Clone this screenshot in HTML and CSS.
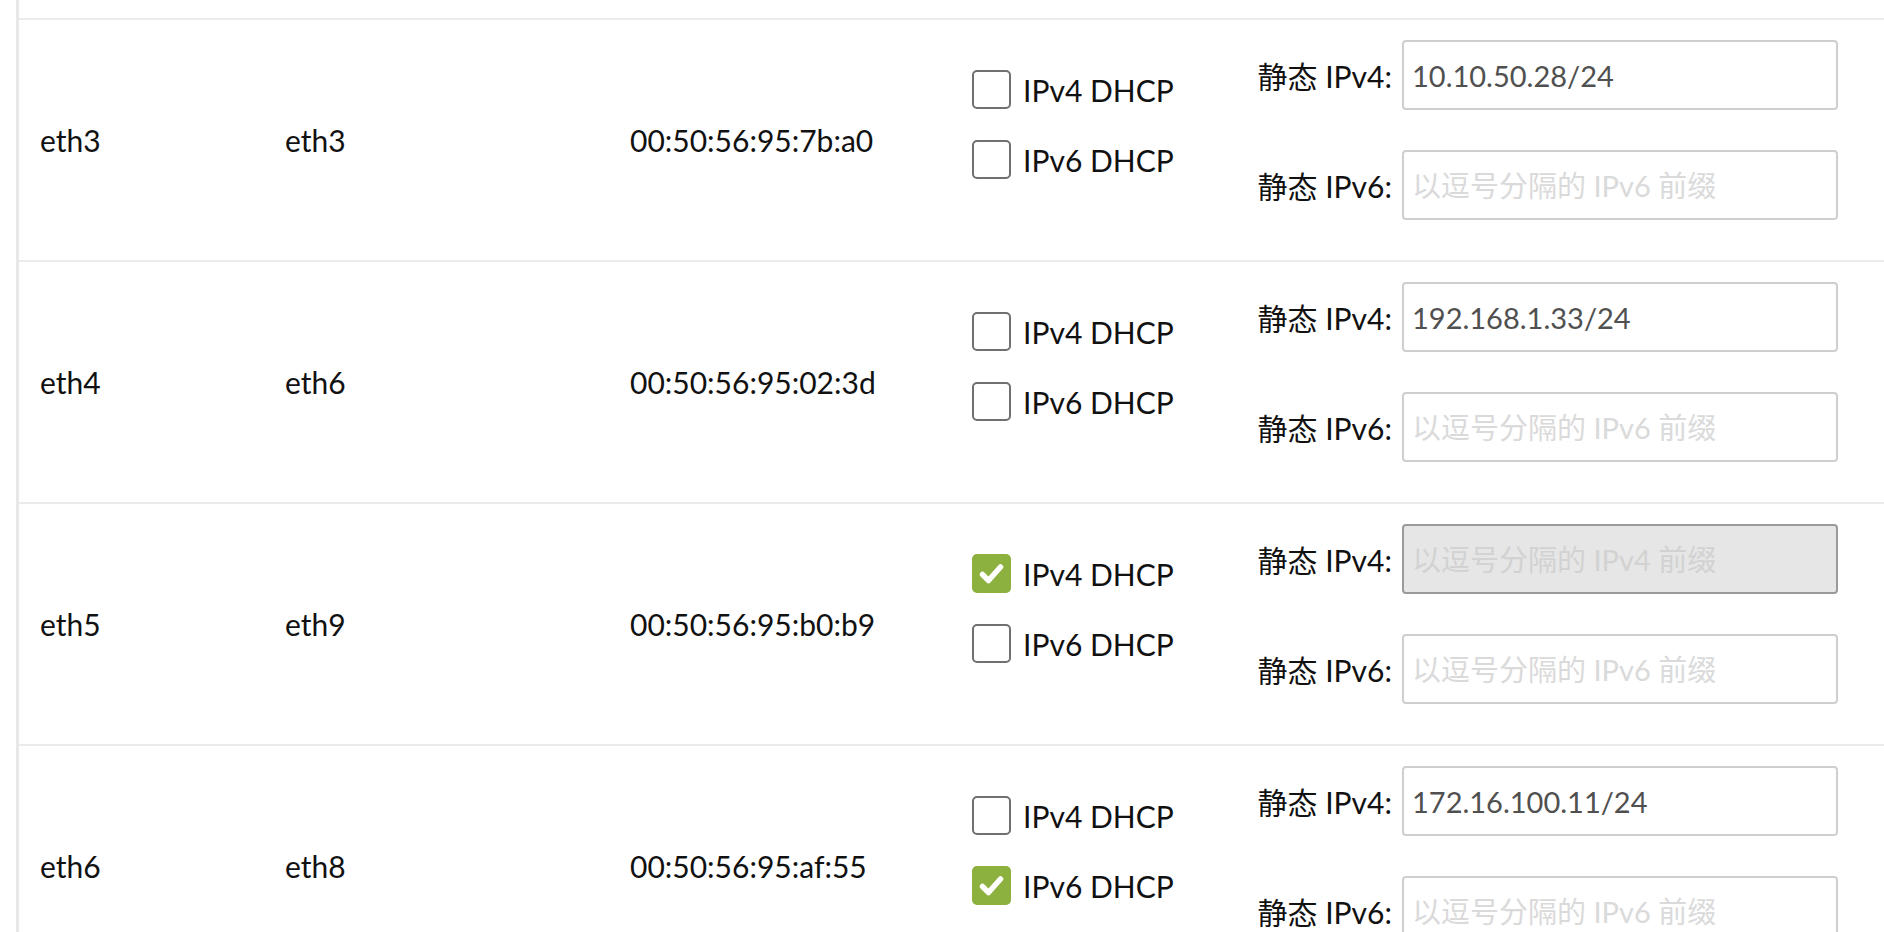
FILE: index.html
```html
<!DOCTYPE html>
<html lang="zh-CN">
<head>
<meta charset="utf-8">
<title>网络接口</title>
<link rel="stylesheet" href="styles.css">
</head>
<body>
<div class="table">
  <div class="row">
    <div class="cell">eth3</div>
    <div class="cell">eth3</div>
    <div class="cell">00:50:56:95:7b:a0</div>
    <div class="checks">
      <label class="check"><span class="box"></span>IPv4 DHCP</label>
      <label class="check"><span class="box"></span>IPv6 DHCP</label>
    </div>
    <div class="form">
      <div class="group"><span class="lbl">静态 IPv4:</span><input class="field" type="text" value="10.10.50.28/24" placeholder="以逗号分隔的 IPv4 前缀"></div>
      <div class="group"><span class="lbl">静态 IPv6:</span><input class="field" type="text" placeholder="以逗号分隔的 IPv6 前缀"></div>
    </div>
  </div>
  <div class="row">
    <div class="cell">eth4</div>
    <div class="cell">eth6</div>
    <div class="cell">00:50:56:95:02:3d</div>
    <div class="checks">
      <label class="check"><span class="box"></span>IPv4 DHCP</label>
      <label class="check"><span class="box"></span>IPv6 DHCP</label>
    </div>
    <div class="form">
      <div class="group"><span class="lbl">静态 IPv4:</span><input class="field" type="text" value="192.168.1.33/24" placeholder="以逗号分隔的 IPv4 前缀"></div>
      <div class="group"><span class="lbl">静态 IPv6:</span><input class="field" type="text" placeholder="以逗号分隔的 IPv6 前缀"></div>
    </div>
  </div>
  <div class="row">
    <div class="cell">eth5</div>
    <div class="cell">eth9</div>
    <div class="cell">00:50:56:95:b0:b9</div>
    <div class="checks">
      <label class="check"><span class="box on"><svg class="tick" viewBox="0 0 39 39"><path d="M10.5 20.5 L16.5 26.5 L28.5 13" fill="none" stroke="#fff" stroke-width="5.5" stroke-linecap="round" stroke-linejoin="round"/></svg></span>IPv4 DHCP</label>
      <label class="check"><span class="box"></span>IPv6 DHCP</label>
    </div>
    <div class="form">
      <div class="group"><span class="lbl">静态 IPv4:</span><input class="field" type="text" disabled placeholder="以逗号分隔的 IPv4 前缀"></div>
      <div class="group"><span class="lbl">静态 IPv6:</span><input class="field" type="text" placeholder="以逗号分隔的 IPv6 前缀"></div>
    </div>
  </div>
  <div class="row">
    <div class="cell">eth6</div>
    <div class="cell">eth8</div>
    <div class="cell">00:50:56:95:af:55</div>
    <div class="checks">
      <label class="check"><span class="box"></span>IPv4 DHCP</label>
      <label class="check"><span class="box on"><svg class="tick" viewBox="0 0 39 39"><path d="M10.5 20.5 L16.5 26.5 L28.5 13" fill="none" stroke="#fff" stroke-width="5.5" stroke-linecap="round" stroke-linejoin="round"/></svg></span>IPv6 DHCP</label>
    </div>
    <div class="form">
      <div class="group"><span class="lbl">静态 IPv4:</span><input class="field" type="text" value="172.16.100.11/24" placeholder="以逗号分隔的 IPv4 前缀"></div>
      <div class="group"><span class="lbl">静态 IPv6:</span><input class="field" type="text" placeholder="以逗号分隔的 IPv6 前缀"></div>
    </div>
  </div>
</div>
</body>
</html>
```
FILE: styles.css
```css
html, body {
  margin: 0;
  padding: 0;
  background: #fff;
  height: 932px;
  overflow: hidden;
}
body {
  font-family: Lato, "Noto Sans CJK SC", sans-serif;
  font-size: 30px;
  color: #111;
}
.table {
  margin-left: 16px;
  border-left: 3px solid #e8e8e8;
  padding-top: 18px;
  height: 914px;
  overflow: hidden;
}
.row {
  display: grid;
  grid-template-columns: 245px 345px 342px 230px 1fr;
  align-items: center;
  min-height: 240px;
  border-top: 2px solid #ebebeb;
  padding-left: 21px;
}
.cell {
  white-space: nowrap;
}
.checks {
  display: flex;
  flex-direction: column;
  gap: 31px;
  margin-bottom: 31px;
}
.check {
  display: flex;
  align-items: center;
  gap: 12px;
  height: 39px;
  white-space: nowrap;
}
.box {
  position: relative;
  width: 39px;
  height: 39px;
  box-sizing: border-box;
  border: 2px solid #707070;
  border-radius: 5px;
  background: #fff;
  flex: none;
}
.box.on {
  background: #8cb13f;
  border-color: #8cb13f;
}
.tick {
  position: absolute;
  left: -2px;
  top: -2px;
  width: 39px;
  height: 39px;
}
.form {
  display: flex;
  flex-direction: column;
  gap: 40px;
  padding-bottom: 20px;
}
.group {
  display: flex;
  align-items: center;
  gap: 10px;
}
.lbl {
  width: 190px;
  text-align: right;
  white-space: nowrap;
}
.field {
  width: 436px;
  height: 70px;
  box-sizing: border-box;
  border: 2px solid #cfcfcf;
  border-radius: 4px;
  padding: 0 8px;
  font-family: Lato, "Noto Sans CJK SC", sans-serif;
  font-size: 29px;
  color: #505050;
  background: #fff;
  outline: none;
}
.field::placeholder {
  color: #dadada;
}
.field:disabled {
  background: #e6e6e6;
  border-color: #9a9a9a;
}
.field:disabled::placeholder {
  color: #d2d2d2;
}
```
